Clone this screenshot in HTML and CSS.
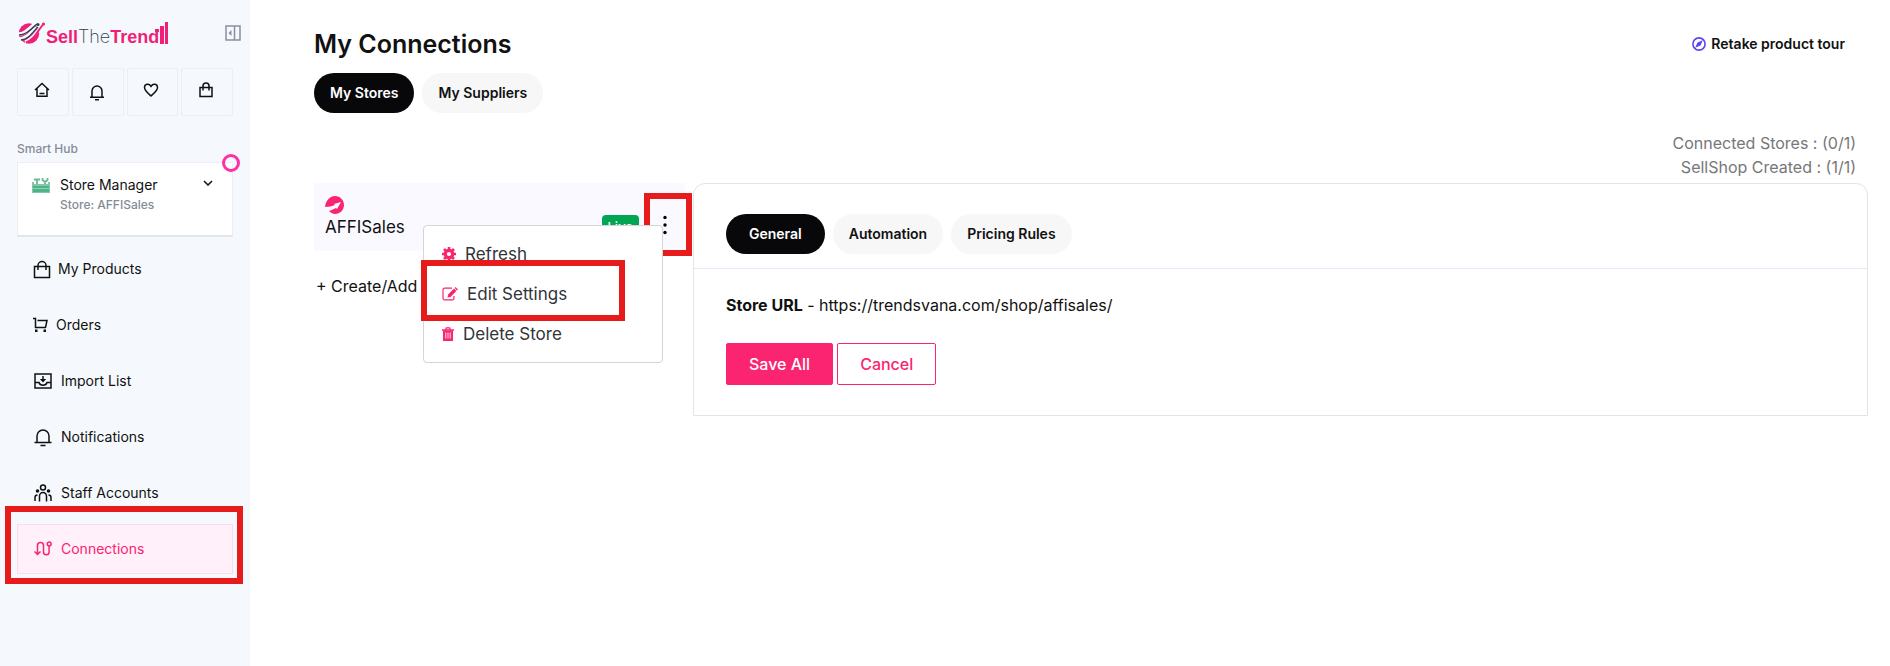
FILE: index.html
```html
<!DOCTYPE html>
<html lang="en">
  <head>
    <meta charset="UTF-8" />
    <meta name="viewport" content="width=device-width, initial-scale=1.0" />
    <title>My Connections - SellTheTrend</title>
    <link rel="stylesheet" href="styles.css">
  </head>
  <body>
    <aside class="sidebar">
      <div class="brand-row">
        <a class="brand" href="#" aria-label="SellTheTrend">
          <svg class="brand-mark" width="28" height="22" viewBox="0 0 28 22">
            <circle cx="11" cy="11.500" r="10.200" fill="#f01f77" />
            <path d="M-1 12c6 1 10-3 18-10M0 17c8 0 12-5 18-12" stroke="#f5f9fd" stroke-width="3.600" fill="none" />
            <path d="M1 13c7 0 11-5 18-11M3 18c8-1 10-6 17-13" stroke="#2d3e4e" stroke-width="1.400" fill="none" />
            <path d="M7 20c8-3 10-9 18-17" stroke="#f5f9fd" stroke-width="3" fill="none" />
            <path d="M8 20.500c8-3 10-9 17-18" stroke="#f01f77" stroke-width="2" fill="none" />
            <circle cx="20" cy="2.500" r="1.500" fill="#2d3e4e" />
            <circle cx="25.500" cy="2" r="1.600" fill="#f01f77" />
          </svg>
          <span class="brand-text"><b>Sell</b><span>The</span><b>Trend</b></span>
          <svg class="brand-bars" width="13" height="22" viewBox="0 0 13 22">
            <path d="M0 7h4v3H0zM5 4h4v18H5zM10 0h3v22h-3z" fill="#f01f77" />
          </svg>
        </a>
        <button class="icon-btn" aria-label="Collapse sidebar">
          <svg width="16" height="16" viewBox="0 0 16 16" fill="none" stroke="#8a8f9e" stroke-width="1.500">
            <path d="M1 1h14v14H1zM9.500 1v14" />
            <path d="M6.500 5v6L3.500 8z" fill="#8a8f9e" stroke="none" />
          </svg>
        </button>
      </div>

      <div class="shortcuts">
        <button aria-label="Home">
          <svg width="16" height="16" viewBox="0 0 16 16"><path d="M1 8l7-6.500L15 8M3 6.500V14.200h10V6.500M5.500 11.500h5" /></svg>
        </button>
        <button aria-label="Notifications">
          <svg class="low" width="16" height="18" viewBox="0 0 16 18"><path d="M1 14.200h14M3 14V8a5 5 0 0 1 10 0v6M6 16.800h4" /></svg>
        </button>
        <button aria-label="Favorites">
          <svg width="16" height="16" viewBox="0 0 16 16"><path d="M8 14C4 10.500 1.500 8.500 1.500 5.500 1.500 2 6 1 8 4.300 10 1 14.500 2 14.500 5.500 14.500 8.500 12 10.500 8 14z" /></svg>
        </button>
        <button aria-label="Products">
          <svg width="16" height="16" viewBox="0 0 16 16"><path d="M2 5.500h12v9H2zM5 8.500V4a3 3 0 0 1 6 0v4.500" /></svg>
        </button>
      </div>

      <div class="section-label">Smart Hub</div>
      <button class="hub">
        <svg class="toolbox" width="18" height="17" viewBox="0 0 18 17">
          <path d="M5 2v6M2 2.500h6M13 8V5M10.500 1v2l2.500 2 2.500-2V1" stroke="#6fb598" stroke-width="1.800" fill="none" />
          <path d="M0 5h2v2h14V5h2v11H0z" fill="#7fc9a5" />
          <path d="M1 9h16v6H1z" fill="#4fb389" />
          <path d="M0 11.500h18" stroke="#8fd0b3" />
        </svg>
        <span class="hub-text">
          <span class="hub-title">Store Manager</span>
          <span class="hub-store">Store: AFFISales</span>
        </span>
        <svg class="chevron" width="10" height="6" viewBox="0 0 10 6"><path d="M1 1l4 4 4-4" fill="none" stroke="#111" stroke-width="1.500" /></svg>
        <span class="ring"></span>
      </button>

      <nav class="menu">
        <a href="#">
          <svg width="18" height="19" viewBox="0 0 18 19"><path d="M1.500 6.500h15v11h-15zM5 10V5.500a4 4 0 0 1 8 0V10" /></svg>
          My Products
        </a>
        <a href="#">
          <svg width="16" height="16" viewBox="0 0 16 16"><path d="M0 1.500h2.500v9H13M4.500 3.500H14l-1.500 7" /><path class="fill" d="M2 12.500h2.500V15H2zM10.500 12.500H13V15h-2.500z" /></svg>
          Orders
        </a>
        <a class="wide" href="#">
          <svg width="18" height="16" viewBox="0 0 18 16"><path d="M1 1h16v14H1zM1 9.500h4c1 3.500 7 3.500 8 0h4M9 3v5" /><path class="fill" d="M5.800 6h6.400L9 9.500z" /></svg>
          Import List
        </a>
        <a class="wide" href="#">
          <svg width="18" height="19" viewBox="0 0 18 19"><path d="M.5 14.500h17M3 14V8a6 6 0 0 1 12 0v6M6.500 17.500h5" /></svg>
          Notifications
        </a>
        <a class="wide" href="#">
          <svg width="18" height="18" viewBox="0 0 18 18"><circle cx="9" cy="3.500" r="2.500" /><circle class="fill" cx="3.500" cy="7" r="1.800" /><circle class="fill" cx="14.500" cy="7" r="1.800" /><path d="M5.500 17.500V12a3.500 3.500 0 0 1 7 0v5.500M1 17v-3.500c0-1.500 1-2.500 2.500-2.500M17 17v-3.500c0-1.500-1-2.500-2.500-2.500" /></svg>
          Staff Accounts
        </a>
        <a class="wide active" href="#">
          <svg width="18" height="16" viewBox="0 0 18 16"><path d="M3.500 14V4.500a3 3 0 0 1 6 0V11a2.800 2.800 0 0 0 5.600 0V5M.5 10.500l3 3 3-3" /><circle cx="15.200" cy="3" r="1.900" /></svg>
          Connections
          <span class="mark mark-nav"></span>
        </a>
      </nav>
    </aside>

    <main class="content">
      <header class="page-head">
        <h1>My Connections</h1>
        <a class="tour" href="#">
          <svg width="14" height="14" viewBox="0 0 14 14"><circle cx="7" cy="7" r="6.100" fill="none" stroke="#5b45f5" stroke-width="1.600" /><path d="M10.800 3.200L8.500 8.500 3.200 10.800 5.500 5.500z" fill="#5b45f5" /></svg>
          Retake product tour
        </a>
      </header>

      <div class="tabs">
        <button class="tab on">My Stores</button>
        <button class="tab">My Suppliers</button>
      </div>

      <div class="counts">
        <div>Connected Stores : (0/1)</div>
        <div>SellShop Created : (1/1)</div>
      </div>

      <div class="columns">
        <section class="stores">
          <div class="store">
            <div class="store-name">
              <svg width="19" height="18" viewBox="0 0 19 18">
                <path d="M0 11C1 4 5 0 10 0c5 0 9 4 9 9 0 5-4 9-9 9-2 0-4-1-6-3 3-1 5-2 7-3l1 1 4-7-7 2 1 1c-3 1-6 2-10 2z" fill="#fa2470" />
              </svg>
              <span>AFFISales</span>
            </div>
            <span class="badge">Live</span>
            <button class="kebab" aria-label="Store actions">
              <svg width="4" height="20" viewBox="0 0 4 20"><circle cx="2" cy="2.500" r="1.700" /><circle cx="2" cy="10" r="1.700" /><circle cx="2" cy="17.500" r="1.700" /></svg>
              <span class="mark mark-kebab"></span>
            </button>
            <div class="dropdown">
              <button>
                <svg width="14" height="14" viewBox="0 0 14 14"><circle cx="7" cy="7" r="3.700" fill="none" stroke="#fa2470" stroke-width="3.200" /><path d="M7 0v3M7 11v3M0 7h3M11 7h3M2 2l2 2M10 10l2 2M12 2l-2 2M4 10l-2 2" stroke="#fa2470" stroke-width="2.600" /></svg>
                Refresh
              </button>
              <button>
                <svg width="16" height="14" viewBox="0 0 16 14"><path d="M10 1.200H2.500a1.500 1.500 0 0 0-1.500 1.500v8.600a1.500 1.500 0 0 0 1.500 1.500h8a1.500 1.500 0 0 0 1.500-1.500V9" fill="none" stroke="#fa2470" stroke-width="1.200" /><path d="M5.500 10.500l.6-3L12 1.600l2.400 2.400-5.900 5.900zM12.600 1l1-1L16 2.400l-1 1z" fill="#fa2470" /></svg>
                Edit Settings
                <span class="mark mark-edit"></span>
              </button>
              <button>
                <svg width="12" height="14" viewBox="0 0 12 14"><path d="M0 3h12M3.500 3l.8-2.200h3.400L8.500 3" fill="none" stroke="#fa2470" stroke-width="1.300" /><path d="M1 3.500h10V14H1z" fill="#fa2470" /><path d="M3.800 5.500v6M6 5.500v6M8.200 5.500v6" stroke="#fff" stroke-width=".9" /></svg>
                Delete Store
              </button>
            </div>
          </div>
          <button class="add-store">+ Create/Add</button>
        </section>

        <section class="panel">
          <div class="tabs panel-tabs">
            <button class="tab wide on">General</button>
            <button class="tab">Automation</button>
            <button class="tab">Pricing Rules</button>
          </div>
          <div class="panel-body">
            <p><b>Store URL</b> - https://trendsvana.com/shop/affisales/</p>
            <div class="actions">
              <button class="btn save">Save All</button>
              <button class="btn">Cancel</button>
            </div>
          </div>
        </section>
      </div>
    </main>
  </body>
</html>
```
FILE: styles.css
```css
* {
  box-sizing: border-box;
}
body {
  margin: 0;
  display: flex;
  min-height: 100vh;
  background: #fff;
  color: #111;
  font-family: Inter, "Liberation Sans", sans-serif;
  font-size: 16px;
  line-height: 24px;
}
button {
  font: inherit;
  color: inherit;
  background: none;
  border: none;
  padding: 0;
  cursor: pointer;
}
a {
  color: inherit;
  text-decoration: none;
}
svg {
  display: block;
  flex: none;
}

/* sidebar */
.sidebar {
  width: 250px;
  flex: none;
  padding: 22px 17px;
  background: #f5f9fd;
}
.brand-row {
  display: flex;
  justify-content: space-between;
  align-items: flex-start;
  height: 46px;
  margin-right: -8px;
}
.brand {
  position: relative;
  display: flex;
  width: 151px;
  height: 22px;
  padding-left: 1px;
}
.brand-text {
  display: flex;
  font-family: "Liberation Sans", sans-serif;
  font-size: 18px;
  line-height: 30px;
}
.brand-text b {
  color: #f01f77;
}
.brand-text span {
  font-family: Inter, sans-serif;
  font-weight: 200;
  color: #2d3e4e;
}
.brand-bars {
  position: absolute;
  right: 0;
  top: 0;
}
.icon-btn {
  padding-top: 3px;
}
.shortcuts {
  display: grid;
  grid-template-columns: repeat(4, 1fr);
  gap: 3px;
}
.shortcuts button {
  display: flex;
  justify-content: center;
  align-items: center;
  height: 48px;
  padding: 0 2px 4px 0;
  border: 1px solid #ebeff3;
  border-radius: 2px;
}
.shortcuts svg,
.menu svg {
  fill: none;
  stroke: #111;
  stroke-width: 1.5;
}
.shortcuts .low {
  margin-top: 4px;
}
.section-label {
  margin-top: 23px;
  font-size: 12px;
  font-weight: 500;
  line-height: 20px;
  color: #858b99;
}
.hub {
  position: relative;
  display: flex;
  align-items: flex-start;
  width: 100%;
  height: 75px;
  margin-top: 3px;
  padding: 12px 19px 0 14px;
  background: #fff;
  border: 1px solid #ebeff3;
  border-bottom: 2px solid #e2e6ea;
  text-align: left;
}
.toolbox {
  margin-top: 2px;
}
.hub-text {
  flex: 1;
  margin-left: 10px;
}
.hub-title,
.hub-store {
  display: block;
  font-size: 14px;
  line-height: 20px;
}
.hub-store {
  font-size: 12px;
  font-weight: 500;
  color: #858b99;
}
.chevron {
  margin-top: 5px;
}
.ring {
  position: absolute;
  top: -9px;
  right: -8px;
  width: 18px;
  height: 18px;
  border: 3px solid #ff2fa8;
  border-radius: 50%;
}
.menu {
  display: flex;
  flex-direction: column;
  gap: 6px;
  margin-top: 7px;
}
.menu a {
  position: relative;
  display: flex;
  align-items: center;
  gap: 7px;
  height: 50px;
  padding-left: 15px;
  border: 1px solid transparent;
  font-size: 14px;
}
.menu .wide {
  gap: 9px;
  padding-left: 16px;
}
.menu .fill {
  fill: #111;
  stroke: none;
}
.menu .active {
  background: #fff0fa;
  border-color: #ffd9ea;
  color: #fa2470;
}
.menu .active svg {
  stroke: #fa2470;
}

/* red callout frames */
.mark {
  position: absolute;
  border: 6px solid #e61c1c;
  pointer-events: none;
}
.mark-nav {
  inset: -19px -11px -11px -13px;
}
.mark-kebab {
  inset: -22px -25px -21px -19px;
}
.mark-edit {
  inset: -14px 37px -7px -3px;
}

/* content */
.content {
  flex: 1;
  min-width: 0;
  padding: 26px 22px 0 64px;
}
.page-head {
  display: flex;
  justify-content: space-between;
  align-items: center;
  padding-right: 23px;
}
h1 {
  margin: 0;
  font-size: 25px;
  font-weight: 600;
  line-height: 36px;
}
.tour {
  display: flex;
  align-items: center;
  gap: 5px;
  font-size: 14px;
  font-weight: 600;
}
.tabs {
  display: flex;
  gap: 8px;
  margin-top: 11px;
}
.tab {
  height: 40px;
  padding: 0 16px;
  border-radius: 20px;
  background: #f7f7f8;
  font-size: 14px;
  font-weight: 600;
}
.tab.on {
  background: #08080a;
  color: #fff;
}
.tab.wide {
  padding: 0 23px;
}
.counts {
  margin-top: 18px;
  padding: 0 12px 4px;
  text-align: right;
  color: #777;
}
.columns {
  display: flex;
  align-items: flex-start;
  gap: 8px;
}
.stores {
  width: 371px;
  flex: none;
}
.store {
  position: relative;
  display: flex;
  height: 68px;
  padding: 13px 18px 0 11px;
  background: #f9f9ff;
}
.store-name {
  flex: 1;
  font-size: 17px;
  line-height: 26px;
}
.badge {
  height: 24px;
  margin-top: 19px;
  padding: 0 6px;
  border-radius: 4px;
  background: #00a651;
  color: #fff;
  font-size: 13px;
  font-weight: 500;
}
.kebab {
  position: relative;
  height: 20px;
  margin: 19px 0 0 24px;
}
.dropdown {
  position: absolute;
  top: 42px;
  left: 109px;
  width: 240px;
  padding: 8px 0;
  background: #fff;
  border: 1px solid #d5d5d5;
  border-radius: 4px;
}
.dropdown button {
  position: relative;
  display: flex;
  align-items: center;
  gap: 9px;
  width: 100%;
  height: 40px;
  padding-left: 18px;
  font-size: 17px;
  color: #30343a;
}
.add-store {
  margin: 23px 0 0 2px;
}
.panel {
  flex: 1;
  min-width: 0;
  border: 1px solid #e3e4e8;
  border-radius: 12px 12px 0 0;
}
.panel-tabs {
  margin: 0;
  padding: 30px 32px 14px;
  border-bottom: 1px solid #e4e9f8;
}
.panel-body {
  padding: 24px 32px 30px;
}
.panel-body p {
  margin: 0 0 26px;
}
.actions {
  display: flex;
  gap: 4px;
}
.btn {
  height: 42px;
  padding: 0 22px;
  border: 1px solid #fa2470;
  border-radius: 2px;
  color: #fa2470;
  font-weight: 500;
}
.btn.save {
  background: #fa2470;
  color: #fff;
}
```
